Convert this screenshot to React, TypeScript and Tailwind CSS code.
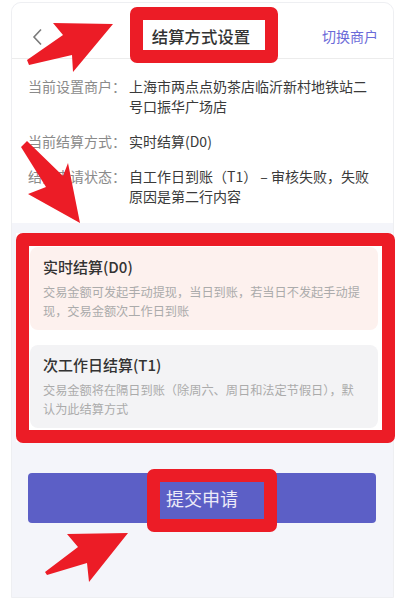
import React from 'react';

const RED = '#ec1c26';

const infoRows = [
  { label: '当前设置商户：', value: '上海市两点点奶茶店临沂新村地铁站二号口振华广场店' },
  { label: '当前结算方式：', value: '实时结算(D0)' },
  { label: '结算申请状态：', value: '自工作日到账（T1） – 审核失败，失败原因是第二行内容' },
];

const options = [
  {
    title: '实时结算(D0)',
    desc: '交易金额可发起手动提现，当日到账，若当日不发起手动提现，交易金额次工作日到账',
    bg: 'bg-[#fdf1ee]',
  },
  {
    title: '次工作日结算(T1)',
    desc: '交易金额将在隔日到账（除周六、周日和法定节假日），默认为此结算方式',
    bg: 'bg-[#f3f3f5]',
  },
];

export default function App() {
  return (
    <div
      className="relative h-[600px] w-[405px] overflow-hidden bg-white pt-[2px] px-[11px]"
      style={{ fontFamily: '"Noto Sans CJK SC", "Noto Sans", sans-serif' }}
    >
      <div className="flex h-[596px] flex-col overflow-hidden rounded-t-[10px] border border-[#eeeff2] bg-[#f4f5fa]">
        {/* header */}
        <div className="flex h-[56px] shrink-0 items-center justify-between border-b border-[#ececec] bg-white pl-[20px] pr-[15px] pt-[12px]">
          <svg width="12" height="18" viewBox="0 0 12 18" fill="none">
            <path d="M9 1.5 L2 9 L9 16.5" stroke="#7a7a7a" strokeWidth="1.6" />
          </svg>
          <div className="pl-[36px] text-[16.4px] font-medium text-[#333]">结算方式设置</div>
          <div className="text-[14px] text-[#6b6bd8]">切换商户</div>
        </div>

        {/* info */}
        <div className="flex flex-col gap-[15px] bg-white pb-[17px] pl-[16px] pt-[17px]">
          {infoRows.map(r => (
            <div key={r.label} className="flex text-[14px] leading-[20px]">
              <div className="w-[101px] shrink-0 text-[#8a8a8a]">{r.label}</div>
              <div className="w-[245px] text-[#3a3a3a]">{r.value}</div>
            </div>
          ))}
        </div>

        {/* options */}
        <div className="mt-[10px] ml-[4px] flex flex-col gap-[15px] bg-white pb-[14px] pl-[14px] pr-[15px] pt-[14px]">
          {options.map(o => (
            <div key={o.title} className={`rounded-[8px] ${o.bg} px-[13px] pb-[9px] pt-[11px]`}>
              <div className="text-[15px] font-medium leading-[18px] text-[#333]">{o.title}</div>
              <div className="mt-[7px] text-[12.2px] leading-[19px] text-[#ababab]">{o.desc}</div>
            </div>
          ))}
        </div>

        {/* submit */}
        <div className="mt-[31px] ml-[16px] mr-[17px] flex h-[50px] items-center justify-center rounded-[4px] bg-[#5c5fc6] text-[18px] text-[#ecebf8]">
          提交申请
        </div>
      </div>

      {/* annotation boxes */}
      <div className="pointer-events-none absolute left-[130px] top-[7px] h-[56px] w-[148px] rounded-[7px] border-[13px]" style={{ borderColor: RED }} />
      <div className="pointer-events-none absolute left-[16px] top-[233px] h-[210px] w-[379px] rounded-[7px] border-[13px]" style={{ borderColor: RED }} />
      <div className="pointer-events-none absolute left-[147px] top-[469px] h-[63px] w-[130px] rounded-[7px] border-[13px]" style={{ borderColor: RED }} />

      {/* annotation arrows */}
      <svg className="pointer-events-none absolute left-0 top-0" width="405" height="600" viewBox="0 0 405 600">
        <polygon fill={RED} points="113,24 53,23 63,35 27,60 29,65 72,55 73,72" />
        <polygon fill={RED} points="27,141 63,176 68,163 80,223 28,194 46,187 21,147" />
        <polygon fill={RED} points="128,533 67,534 78,547 45,572 47,575 87,563 89,582" />
      </svg>
    </div>
  );
}
